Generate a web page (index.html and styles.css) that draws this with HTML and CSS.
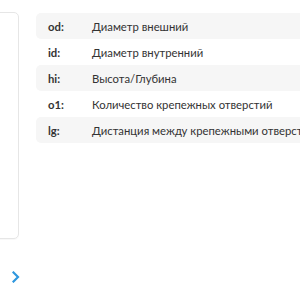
FILE: index.html
```html
<!DOCTYPE html>
<html lang="ru">
<head>
<meta charset="utf-8">
<link rel="stylesheet" href="styles.css">
</head>
<body>
<div class="page">
  <div class="top">
    <div class="card"></div>
    <div class="specs">
      <div class="row alt"><span class="key">od:</span><span class="val">Диаметр внешний</span></div>
      <div class="row"><span class="key">id:</span><span class="val">Диаметр внутренний</span></div>
      <div class="row alt"><span class="key">hi:</span><span class="val">Высота/Глубина</span></div>
      <div class="row"><span class="key">o1:</span><span class="val">Количество крепежных отверстий</span></div>
      <div class="row alt"><span class="key">lg:</span><span class="val">Дистанция между крепежными отверстиями</span></div>
    </div>
  </div>
  <div class="nav">
    <svg class="chev" width="8" height="12" viewBox="0 0 8 12"><path d="M1.5 1.5 L6 6 L1.5 10.5" fill="none" stroke="#2f97de" stroke-width="2.2" stroke-linecap="square"/></svg>
  </div>
</div>
</body>
</html>
```
FILE: styles.css
```css
html, body {
  margin: 0;
  padding: 0;
  background: #fff;
  overflow: hidden;
}
.page {
  width: 300px;
  height: 300px;
  overflow: hidden;
  font-family: Lato, "Open Sans", sans-serif;
  color: #333;
}
.top {
  display: flex;
  align-items: flex-start;
  gap: 17px;
  padding-top: 12px;
}
.card {
  flex: none;
  width: 200px;
  height: 227px;
  margin-left: -181px;
  border: 1px solid #e6e6e6;
  border-radius: 5px;
  box-sizing: border-box;
  box-shadow: 0 1px 1px rgba(0,0,0,0.03);
}
.specs {
  flex: none;
  width: 320px;
  display: flex;
  flex-direction: column;
  padding-top: 1px;
}
.row {
  display: flex;
  align-items: center;
  height: 26px;
  padding-left: 12px;
  border-radius: 5px;
  font-size: 11.3px;
  white-space: nowrap;
}
.row.alt {
  background: #f6f6f6;
}
.key {
  width: 44px;
  flex: none;
  font-weight: 700;
  color: #333;
}
.val {
  color: #333;
}
.nav {
  padding: 32px 0 0 12px;
}
.chev {
  display: block;
}
```
